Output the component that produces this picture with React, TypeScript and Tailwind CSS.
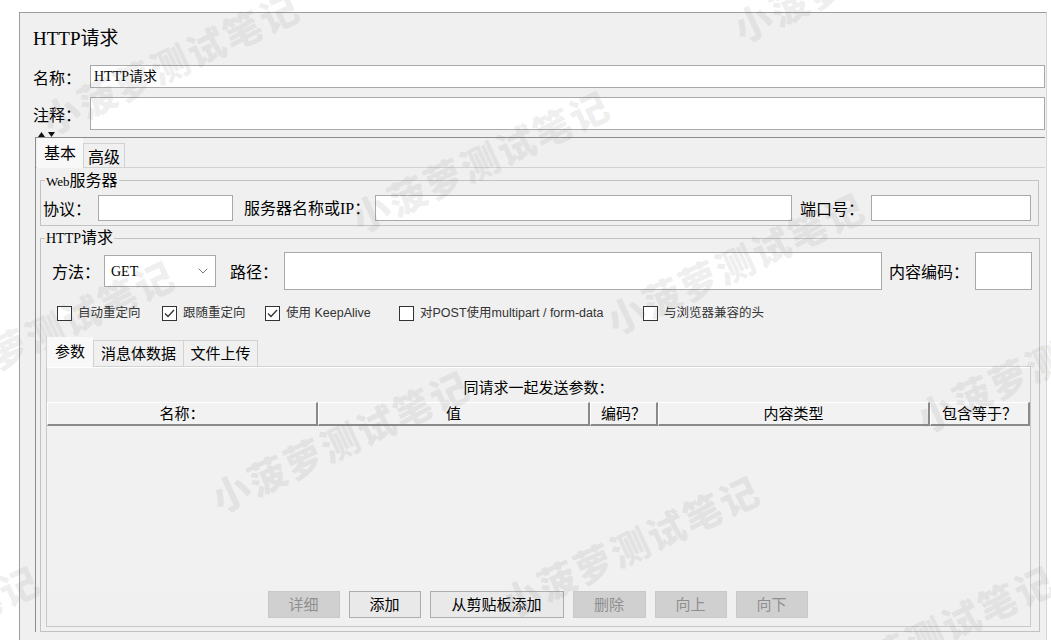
import { ChevronDown } from 'lucide-react';

const serif = "font-['Liberation_Serif','Noto_Sans_CJK_SC',serif]";
const sans = "font-['Liberation_Sans','Noto_Sans_CJK_SC',sans-serif]";

function Box({ className = '', children }: { className?: string; children?: React.ReactNode }) {
  return (
    <div className={`flex items-center border border-[#a9a9a9] bg-white ${className}`}>{children}</div>
  );
}

function Check({ checked, label, className = '' }: { checked?: boolean; label: string; className?: string }) {
  return (
    <div className={`flex items-center gap-[6px] ${className}`}>
      <span className="flex h-[15px] w-[15px] items-center justify-center border border-[#333] bg-white">
        {checked && (
          <svg width="11" height="9" viewBox="0 0 11 9" fill="none">
            <path d="M1 4.5 L4 7.5 L10 1" stroke="#333" strokeWidth="1.3" />
          </svg>
        )}
      </span>
      <span className={`${sans} text-[12.5px] leading-[15px] text-[#333]`}>{label}</span>
    </div>
  );
}

function Head({ className = '', children }: { className?: string; children: React.ReactNode }) {
  return (
    <div
      className={`flex h-full items-center justify-center border-b-2 border-l border-r-2 border-t border-b-[#8a8a8a] border-l-white border-r-[#8a8a8a] border-t-white bg-[#f2f2f2] text-[15px] ${className}`}
    >
      {children}
    </div>
  );
}

function Btn({ label, disabled, className = '' }: { label: string; disabled?: boolean; className?: string }) {
  return (
    <div
      className={`flex h-[27px] items-center justify-center border text-[15px] ${
        disabled ? 'border-[#c9c9c9] bg-[#d0d0d0] text-[#8f8f8f]' : 'border-[#adadad] bg-[#e9e9e9] text-black'
      } ${className}`}
    >
      {label}
    </div>
  );
}

function Mark({ className }: { className: string }) {
  return (
    <span
      className={`pointer-events-none absolute -translate-x-1/2 -translate-y-1/2 -rotate-[25deg] whitespace-nowrap text-[38px] font-black tracking-[2px] text-[#808080]/[0.13] ${className}`}
    >
      小菠萝测试笔记
    </span>
  );
}

export default function App() {
  return (
    <div className="relative h-[640px] w-[1051px] overflow-hidden bg-white font-['Noto_Sans_CJK_SC',sans-serif] text-black">
      <div className="ml-[19px] mt-[12px] h-[640px] w-[1028px] border-l border-r border-t border-[#9c9c9c] border-r-[#d6d6d6] bg-[#f0f0f0] pl-[13px] pr-[1px]">
        <div className={`${serif} pt-[14px] text-[19px] leading-[24px]`}>HTTP请求</div>

        <div className="mt-[14px] flex h-[23px] items-center">
          <span className="w-[57px] text-[16px]">名称：</span>
          <Box className={`${serif} h-full flex-1 px-[3px] text-[14px]`}>HTTP请求</Box>
        </div>

        <div className="mt-[9px] flex h-[33px] items-center">
          <span className="w-[57px] text-[16px]">注释：</span>
          <Box className="h-full flex-1" />
        </div>

        <div className="flex h-[7px] items-center pl-[5px]">
          <svg width="20" height="6" viewBox="0 0 20 6">
            <path d="M0 6 L3.5 1 L7 6 Z" fill="#111" />
            <path d="M10 1 L17 1 L13.5 6 Z" fill="#111" />
          </svg>
        </div>

        <div className="ml-[2px] border-l border-t border-[#8c8c8c]">
          <div className="flex h-[29px] items-end pl-px">
            <div className="relative z-10 -mb-px flex h-[30px] w-[46px] items-center justify-center bg-[#f8f8f8] pb-[2px] text-[16px]">
              基本
            </div>
            <div className="flex h-[24px] w-[42px] items-center justify-center border border-b-0 border-[#d2d2d2] text-[16px]">
              高级
            </div>
          </div>

          <div className="border-t border-[#d2d2d2] pl-[4px] pr-[6px] pt-[3px]">
            <fieldset className="border border-[#c2c2c2] px-[2px] pb-[4px]">
              <legend className="ml-[2px] px-[1px] text-[16px] leading-[16px]">
                <span className={`${serif} text-[13px]`}>Web</span>服务器
              </legend>
              <div className="mt-[5px] flex h-[26px] items-center">
                <span className="w-[55px] text-[16px]">协议：</span>
                <Box className="h-full w-[135px]" />
                <span className="ml-[11px] w-[131px] text-[16px]">
                  服务器名称或<span className={serif}>IP</span>：
                </span>
                <Box className="h-full flex-1" />
                <span className="ml-[8px] w-[71px] text-[16px]">端口号：</span>
                <Box className="mr-[5px] h-full w-[160px]" />
              </div>
            </fieldset>

            <fieldset className="mt-[4px] border border-[#c2c2c2] px-[2px] pb-[4px]">
              <legend className={`${serif} ml-[2px] px-[1px] text-[16px] leading-[16px]`}>
                <span className="text-[14px]">HTTP</span>请求
              </legend>

              <div className="mt-[5px] flex h-[38px] items-center">
                <span className="ml-[9px] w-[52px] text-[16px]">方法：</span>
                <Box className={`${serif} h-[32px] w-[112px] justify-between pl-[6px] pr-[4px] text-[14px]`}>
                  GET
                  <ChevronDown size={16} strokeWidth={1.2} className="text-[#555]" />
                </Box>
                <span className="ml-[14px] w-[54px] text-[16px]">路径：</span>
                <Box className="h-full flex-1" />
                <span className="ml-[7px] w-[86px] text-[16px]">内容编码：</span>
                <Box className="mr-[5px] h-full w-[57px]" />
              </div>

              <div className="ml-[14px] mt-[16px] flex h-[15px] items-center">
                <Check label="自动重定向" className="w-[105px]" />
                <Check checked label="跟随重定向" className="w-[103px]" />
                <Check checked label="使用 KeepAlive" className="w-[134px]" />
                <Check label="对POST使用multipart / form-data" className="w-[244px]" />
                <Check label="与浏览器兼容的头" />
              </div>

              <div className="ml-[3px] mr-[6px] mt-[16px]">
                <div className="flex h-[29px] items-end">
                  <div className="relative z-10 -mb-px flex h-[30px] w-[47px] items-center justify-center border-l border-[#d2d2d2] bg-[#f8f8f8] pb-[2px] text-[15px]">
                    参数
                  </div>
                  <div className="flex h-[26px] w-[91px] items-center justify-center border border-b-0 border-[#d2d2d2] text-[15px]">
                    消息体数据
                  </div>
                  <div className="flex h-[26px] w-[74px] items-center justify-center border border-b-0 border-l-0 border-[#d2d2d2] text-[15px]">
                    文件上传
                  </div>
                </div>

                <div className="flex h-[261px] flex-col border border-[#c8c8c8] border-t-[#d2d2d2] shadow-[inset_0_1px_0_#ffffff]">
                  <div className="pt-[10px] text-center text-[15px] leading-[20px]">同请求一起发送参数：</div>
                  <div className="mt-[5px] flex h-[24px]">
                    <Head className="w-[271px]">名称：</Head>
                    <Head className="w-[272px]">值</Head>
                    <Head className="w-[68px]">编码？</Head>
                    <Head className="w-[272px]">内容类型</Head>
                    <Head className="w-[100px]">包含等于？</Head>
                  </div>
                  <div className="flex-1 bg-[#f1f1f1]" />
                  <div className="mb-[8px] flex justify-center gap-[9px] pr-[2px]">
                    <Btn disabled label="详细" className="w-[72px]" />
                    <Btn label="添加" className="w-[72px]" />
                    <Btn label="从剪贴板添加" className="w-[134px]" />
                    <Btn disabled label="删除" className="w-[73px]" />
                    <Btn disabled label="向上" className="w-[72px]" />
                    <Btn disabled label="向下" className="w-[72px]" />
                  </div>
                </div>
              </div>
            </fieldset>
          </div>
        </div>
      </div>

      <Mark className="left-[170px] top-[62px]" />
      <Mark className="left-[862px] top-[-30px]" />
      <Mark className="left-[480px] top-[160px]" />
      <Mark className="left-[735px] top-[262px]" />
      <Mark className="left-[45px] top-[330px]" />
      <Mark className="left-[340px] top-[440px]" />
      <Mark className="left-[1045px] top-[360px]" />
      <Mark className="left-[630px] top-[545px]" />
      <Mark className="left-[925px] top-[635px]" />
      <Mark className="left-[-90px] top-[635px]" />
    </div>
  );
}
